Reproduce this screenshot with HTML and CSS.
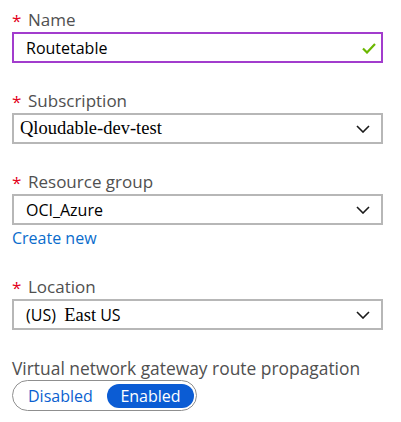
FILE: index.html
```html
<!DOCTYPE html>
<html>
<head>
<meta charset="utf-8">
<link rel="stylesheet" href="styles.css">
</head>
<body>
<form class="form">
  <div class="field">
    <div class="label"><span class="req">*</span>Name</div>
    <div class="box box-valid">
      <span class="val">Routetable</span>
      <svg class="check" width="14" height="11" viewBox="0 0 14 11"><path d="M1 5.5 L5 9.5 L13 1" fill="none" stroke="#6bb700" stroke-width="2.2"/></svg>
    </div>
  </div>
  <div class="field">
    <div class="label"><span class="req">*</span>Subscription</div>
    <div class="box">
      <span class="val serif tight">Qloudable-dev-test</span>
      <svg class="chev" width="14" height="8" viewBox="0 0 14 8"><path d="M1 1 L7 7 L13 1" fill="none" stroke="#1a1a1a" stroke-width="1.6"/></svg>
    </div>
  </div>
  <div class="field">
    <div class="label"><span class="req">*</span>Resource group</div>
    <div class="box">
      <span class="val">OCI_Azure</span>
      <svg class="chev" width="14" height="8" viewBox="0 0 14 8"><path d="M1 1 L7 7 L13 1" fill="none" stroke="#1a1a1a" stroke-width="1.6"/></svg>
    </div>
    <a class="link">Create new</a>
  </div>
  <div class="field">
    <div class="label"><span class="req">*</span>Location</div>
    <div class="box">
      <span class="val">(US)&nbsp; <span class="serif">East</span> US</span>
      <svg class="chev" width="14" height="8" viewBox="0 0 14 8"><path d="M1 1 L7 7 L13 1" fill="none" stroke="#1a1a1a" stroke-width="1.6"/></svg>
    </div>
  </div>
  <div class="field">
    <div class="label label-wide">Virtual network gateway route propagation</div>
    <div class="toggle">
      <span class="opt">Disabled</span>
      <span class="opt opt-on">Enabled</span>
    </div>
  </div>
</form>
</body>
</html>
```
FILE: styles.css
```css
html, body {
  margin: 0;
  padding: 0;
  background: #ffffff;
}
body {
  font-family: "Open Sans", "Noto Sans", sans-serif;
  color: #1a1a1a;
}
.form {
  width: 371px;
  margin-left: 12px;
  padding-top: 8px;
  display: flex;
  flex-direction: column;
  gap: 26px;
}
.field {
  display: flex;
  flex-direction: column;
}
.label {
  height: 24px;
  line-height: 22px;
  font-size: 17px;
  color: #505050;
  display: flex;
  align-items: center;
  white-space: nowrap;
}
.label-wide {
  font-size: 17.4px;
}
.req {
  color: #e3001b;
  font-size: 17px;
  width: 16px;
  margin-top: 1px;
}
.box {
  box-sizing: border-box;
  height: 31px;
  border: 2px solid #b7b7b7;
  display: flex;
  align-items: center;
  justify-content: space-between;
  padding: 0 11px 0 12px;
}
.box-valid {
  border-color: #a23ccd;
  padding-right: 5px;
}
.val {
  font-size: 16px;
  color: #000;
  white-space: pre;
}
.serif {
  font-family: "Liberation Serif", "Times New Roman", serif;
  font-size: 18.5px;
}
.tight {
  margin-left: -6px;
}
.check {
  display: block;
  margin-top: 2px;
}
.chev {
  display: block;
}
.link {
  height: 24px;
  line-height: 27px;
  font-size: 16px;
  color: #0a6ccc;
}
.toggle {
  box-sizing: border-box;
  width: 185px;
  height: 31px;
  border: 1.5px solid #8f8f8f;
  border-radius: 16px;
  display: flex;
  align-items: center;
  justify-content: space-between;
  padding: 0 2px 0 15px;
}
.opt {
  font-size: 16px;
  color: #0b5fd0;
}
.opt-on {
  background: #0b5cd4;
  color: #fff;
  height: 24px;
  line-height: 24px;
  width: 87px;
  border-radius: 12px;
  text-align: center;
}
```
